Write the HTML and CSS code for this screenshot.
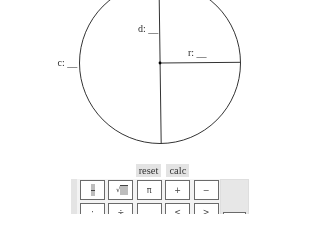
FILE: index.html
```html
<!DOCTYPE html>
<html>
<head>
<meta charset="utf-8">
<link rel="stylesheet" href="styles.css">
</head>
<body>
<svg class="diagram" width="320" height="160" viewBox="0 0 320 160">
  <circle cx="160" cy="63" r="80.5" fill="none" stroke="#333" stroke-width="1"/>
  <line x1="159" y1="-18" x2="161.2" y2="144" stroke="#333" stroke-width="1"/>
  <line x1="160" y1="63" x2="240.5" y2="62.3" stroke="#333" stroke-width="1"/>
  <circle cx="160" cy="63" r="1.4" fill="#000"/>
  <text class="lbl" x="138" y="32">d: __</text>
  <text class="lbl" x="188" y="55.5">r: __</text>
  <text class="lbl" x="57.5" y="65.5">c: __</text>
</svg>
<div class="actions">
  <button class="btn">reset</button>
  <button class="btn">calc</button>
</div>
<div class="keypad">
  <div class="keys">
    <div class="key"><span class="frac"><i></i><b></b><i></i></span></div>
    <div class="key"><span class="sqrt"><span class="rad">√</span><span class="box"></span></span></div>
    <div class="key">π</div>
    <div class="key">+</div>
    <div class="key">−</div>
    <div class="key">·</div>
    <div class="key">÷</div>
    <div class="key">.</div>
    <div class="key">&lt;</div>
    <div class="key">&gt;</div>
  </div>
  <div class="side"><div class="key side-key"></div></div>
</div>
</body>
</html>
```

FILE: styles.css
```css
html, body {
  margin: 0;
  padding: 0;
  background: #fff;
  width: 320px;
  height: 214px;
  overflow: hidden;
  font-family: "Liberation Serif", "Times New Roman", serif;
}
.diagram {
  display: block;
  will-change: transform;
}
.lbl {
  font-family: "Liberation Serif", serif;
  font-size: 10px;
  fill: #2a2a2a;
}
.actions {
  display: flex;
  justify-content: center;
  gap: 5px;
  margin-top: 4px;
  padding-left: 5px;
  will-change: transform;
}
.btn {
  font-family: "Liberation Serif", serif;
  font-size: 10.5px;
  line-height: 13px;
  height: 13px;
  padding: 0 3px;
  border: none;
  background: #e3e3e3;
  color: #333;
  margin: 0;
}
.keypad {
  display: flex;
  width: max-content;
  margin: 2px auto 0;
  background: #f3f3f3;
  border-left: 6px solid #e4e4e4;
  padding-left: 3px;
  height: 40px;
  will-change: transform;
}
.keys {
  display: grid;
  grid-template-columns: repeat(5, 25px);
  grid-auto-rows: 19.5px;
  column-gap: 3.4px;
  row-gap: 3px;
  padding-top: 1.3px;
}
.key {
  box-sizing: border-box;
  border: 1.5px solid #6a6a6a;
  background: #fff;
  display: flex;
  align-items: center;
  justify-content: center;
  font-family: "DejaVu Sans", sans-serif;
  font-size: 8px;
  color: #444;
}
.side {
  width: 28.6px;
  margin-left: 1.7px;
  background: #e7e7e7;
  box-sizing: border-box;
  border: 1px solid #dedede;
  padding-top: 31.5px;
  padding-left: 1.5px;
}
.side-key {
  width: 23.5px;
  height: 20px;
}
.frac {
  display: flex;
  flex-direction: column;
  align-items: center;
}
.frac i {
  display: block;
  width: 4px;
  height: 5.5px;
  background: #bdbdbd;
}
.frac b {
  display: block;
  width: 4px;
  height: 1px;
  background: #444;
}
.sqrt {
  display: flex;
  align-items: flex-start;
  margin-left: 2px;
}
.sqrt .rad {
  font-size: 7px;
  line-height: 9px;
  margin-top: 1px;
}
.sqrt .box {
  display: block;
  width: 7.5px;
  height: 9px;
  background: #bdbdbd;
  border-top: 1px solid #444;
}
```
